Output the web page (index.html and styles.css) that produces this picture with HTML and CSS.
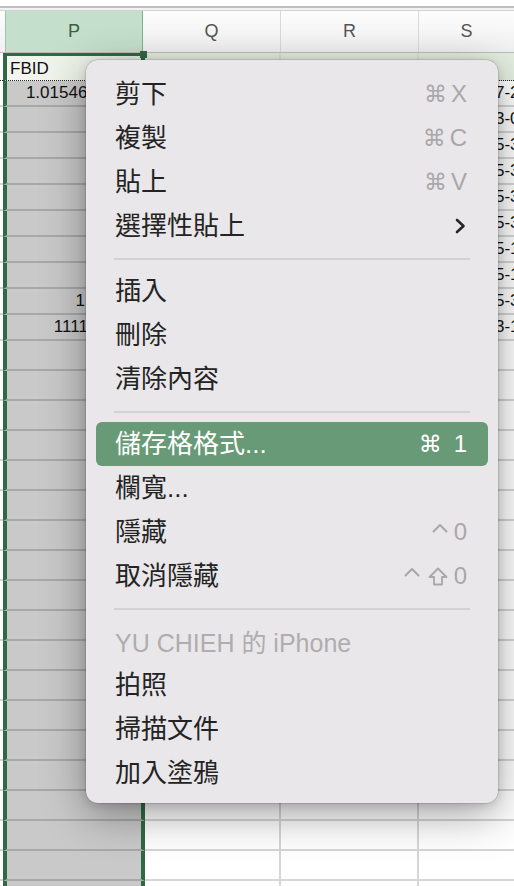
FILE: index.html
```html
<!DOCTYPE html>
<html lang="zh-Hant">
<head>
<meta charset="utf-8">
<title>Excel context menu</title>
<link rel="stylesheet" href="styles.css">
</head>
<body>
<div class="screen">
  <div class="topbar"></div>
  <div class="header">
    <div class="hg"></div>
    <div class="hc hp">P</div>
    <div class="hc">Q</div>
    <div class="hc">R</div>
    <div class="hc hs">S</div>
  </div>
  <div class="sheet">
    <div class="row r1"><div class="g"></div><div class="c p active">FBID</div><div class="c q"></div><div class="c r"></div><div class="c s"></div></div>
    <div class="row r26"><div class="g"></div><div class="c p num">1.015465E+16</div><div class="c q"></div><div class="c r"></div><div class="c s">2016-07-21</div></div>
    <div class="row r26"><div class="g"></div><div class="c p num"></div><div class="c q"></div><div class="c r"></div><div class="c s">2016-03-04</div></div>
    <div class="row r26"><div class="g"></div><div class="c p num"></div><div class="c q"></div><div class="c r"></div><div class="c s">2016-05-31</div></div>
    <div class="row r26"><div class="g"></div><div class="c p num"></div><div class="c q"></div><div class="c r"></div><div class="c s">2016-05-31</div></div>
    <div class="row r26"><div class="g"></div><div class="c p num"></div><div class="c q"></div><div class="c r"></div><div class="c s">2016-05-30</div></div>
    <div class="row r26"><div class="g"></div><div class="c p num"></div><div class="c q"></div><div class="c r"></div><div class="c s">2016-05-30</div></div>
    <div class="row r26"><div class="g"></div><div class="c p num"></div><div class="c q"></div><div class="c r"></div><div class="c s">2016-05-18</div></div>
    <div class="row r26"><div class="g"></div><div class="c p num"></div><div class="c q"></div><div class="c r"></div><div class="c s">2016-05-17</div></div>
    <div class="row r26"><div class="g"></div><div class="c p num">1.00001</div><div class="c q"></div><div class="c r"></div><div class="c s">2016-05-31</div></div>
    <div class="row r26"><div class="g"></div><div class="c p num">1111111111</div><div class="c q"></div><div class="c r"></div><div class="c s">2016-03-15</div></div>
    <div class="row r30"><div class="g"></div><div class="c p"></div><div class="c q"></div><div class="c r"></div><div class="c s"></div></div>
    <div class="row r30"><div class="g"></div><div class="c p"></div><div class="c q"></div><div class="c r"></div><div class="c s"></div></div>
    <div class="row r30"><div class="g"></div><div class="c p"></div><div class="c q"></div><div class="c r"></div><div class="c s"></div></div>
    <div class="row r30"><div class="g"></div><div class="c p"></div><div class="c q"></div><div class="c r"></div><div class="c s"></div></div>
    <div class="row r30"><div class="g"></div><div class="c p"></div><div class="c q"></div><div class="c r"></div><div class="c s"></div></div>
    <div class="row r30"><div class="g"></div><div class="c p"></div><div class="c q"></div><div class="c r"></div><div class="c s"></div></div>
    <div class="row r30"><div class="g"></div><div class="c p"></div><div class="c q"></div><div class="c r"></div><div class="c s"></div></div>
    <div class="row r30"><div class="g"></div><div class="c p"></div><div class="c q"></div><div class="c r"></div><div class="c s"></div></div>
    <div class="row r30"><div class="g"></div><div class="c p"></div><div class="c q"></div><div class="c r"></div><div class="c s"></div></div>
    <div class="row r30"><div class="g"></div><div class="c p"></div><div class="c q"></div><div class="c r"></div><div class="c s"></div></div>
    <div class="row r30"><div class="g"></div><div class="c p"></div><div class="c q"></div><div class="c r"></div><div class="c s"></div></div>
    <div class="row r30"><div class="g"></div><div class="c p"></div><div class="c q"></div><div class="c r"></div><div class="c s"></div></div>
    <div class="row r30"><div class="g"></div><div class="c p"></div><div class="c q"></div><div class="c r"></div><div class="c s"></div></div>
    <div class="row r30"><div class="g"></div><div class="c p"></div><div class="c q"></div><div class="c r"></div><div class="c s"></div></div>
    <div class="row r30"><div class="g"></div><div class="c p"></div><div class="c q"></div><div class="c r"></div><div class="c s"></div></div>
    <div class="row r30"><div class="g"></div><div class="c p"></div><div class="c q"></div><div class="c r"></div><div class="c s"></div></div>
    <div class="row r30"><div class="g"></div><div class="c p"></div><div class="c q"></div><div class="c r"></div><div class="c s"></div></div>
    <div class="row r30"><div class="g"></div><div class="c p"></div><div class="c q"></div><div class="c r"></div><div class="c s"></div></div>
    <div class="row r30"><div class="g"></div><div class="c p"></div><div class="c q"></div><div class="c r"></div><div class="c s"></div></div>
  </div>

  <div class="menu">
    <div class="item"><span class="label">剪下</span><span class="key"><span class="cmd">⌘</span>X</span></div>
    <div class="item"><span class="label">複製</span><span class="key"><span class="cmd">⌘</span>C</span></div>
    <div class="item"><span class="label">貼上</span><span class="key"><span class="cmd">⌘</span>V</span></div>
    <div class="item"><span class="label">選擇性貼上</span><svg class="chev" width="11" height="16" viewBox="0 0 11 16"><polyline points="2,2 8.5,8 2,14" fill="none" stroke="#262626" stroke-width="2.6" stroke-linecap="round" stroke-linejoin="round"/></svg></div>
    <div class="sep"></div>
    <div class="item"><span class="label">插入</span></div>
    <div class="item"><span class="label">刪除</span></div>
    <div class="item"><span class="label">清除內容</span></div>
    <div class="sep"></div>
    <div class="item hl"><span class="label">儲存格格式...</span><span class="key"><span class="cmd wide">⌘</span>1</span></div>
    <div class="item"><span class="label">欄寬...</span></div>
    <div class="item"><span class="label">隱藏</span><span class="key"><svg class="caret" width="16" height="10" viewBox="0 0 16 10"><polyline points="1.5,8.5 8,2 14.5,8.5" fill="none" stroke="#a9a7a9" stroke-width="2" stroke-linecap="round" stroke-linejoin="round"/></svg><span class="zero">0</span></span></div>
    <div class="item"><span class="label">取消隱藏</span><span class="key"><svg class="caret" width="16" height="10" viewBox="0 0 16 10"><polyline points="1.5,8.5 8,2 14.5,8.5" fill="none" stroke="#a9a7a9" stroke-width="2" stroke-linecap="round" stroke-linejoin="round"/></svg><svg class="shift" width="20" height="19" viewBox="0 0 20 19"><path d="M10 1.5 L18.5 10 H14 V17.5 H6 V10 H1.5 Z" fill="none" stroke="#a9a7a9" stroke-width="1.8" stroke-linejoin="round"/></svg><span class="zero">0</span></span></div>
    <div class="sep"></div>
    <div class="item dis"><span class="label">YU CHIEH 的 iPhone</span></div>
    <div class="item"><span class="label">拍照</span></div>
    <div class="item"><span class="label">掃描文件</span></div>
    <div class="item"><span class="label">加入塗鴉</span></div>
  </div>
</div>
</body>
</html>
```

FILE: styles.css
```css
* { box-sizing: border-box; }

html, body {
  margin: 0;
  padding: 0;
  background: #ffffff;
}

.screen {
  position: relative;
  width: 514px;
  height: 886px;
  overflow: hidden;
  font-family: "Liberation Sans", Arial, sans-serif;
  color: #111;
}

.topbar {
  height: 11px;
  background: linear-gradient(to bottom, #ffffff 0, #ffffff 6px, #bfbfbf 6px, #bfbfbf 8px, #f2f2f2 8px, #f2f2f2 10px, #d2d2d2 10px, #d2d2d2 11px);
}

.header {
  display: flex;
  height: 42px;
  background: linear-gradient(to bottom, #fdfdfd, #f0f0f0);
  border-bottom: 1px solid #bdbdbd;
}

.hg {
  width: 5px;
  flex: none;
}

.hc {
  width: 138px;
  flex: none;
  display: flex;
  align-items: center;
  justify-content: center;
  font-size: 18px;
  color: #555;
  border-right: 1px solid #d9d9d9;
}

.hc.hp {
  background: #c4dfcb;
  color: #3b5e47;
  border-left: 1px solid #9cc7a5;
  border-right: 1px solid #79b486;
}

.hc.hs {
  flex: 1;
  width: auto;
  border-right: none;
}

.sheet {
  display: flex;
  flex-direction: column;
}

.row {
  display: flex;
  flex: none;
}

.r1 { height: 28px; }
.r26 { height: 26px; }
.r30 { height: 30px; }

.g {
  width: 3px;
  flex: none;
  border-bottom: 2px solid #d2d2d2;
}

.c {
  flex: none;
  display: flex;
  align-items: center;
  font-size: 17px;
  white-space: nowrap;
  overflow: hidden;
  border-bottom: 2px solid #d6d6d6;
}

.c.p {
  width: 142px;
  background: #c9c9c9;
  border-left: 4px solid #2f6a44;
  border-right: 4px solid #2f6a44;
  border-bottom-color: #a8a8a8;
}

.c.num {
  justify-content: flex-end;
  padding-right: 4px;
}

.c.q {
  width: 136px;
  border-right: 2px solid #d6d6d6;
}

.c.r {
  width: 138px;
  border-right: 2px solid #d6d6d6;
}

.c.s {
  flex: 1;
  padding-left: 23px;
}

.r1 .c,
.r1 .g {
  border-bottom: 1px dotted #222;
}

.r1 .c.q,
.r1 .c.r,
.r1 .c.s {
  background: #e4eedf;
}

.r1 .c.q,
.r1 .c.r {
  border-right-color: #d9e3d4;
}

.c.active {
  position: relative;
  overflow: visible;
  background: linear-gradient(to right, #f3f6f0, #e7efe2);
  border-top: 3px solid #2f6a44;
  padding-left: 3px;
  padding-top: 1px;
  font-size: 17px;
  color: #111;
}

.c.active::after {
  content: "";
  position: absolute;
  right: -6px;
  top: -5px;
  width: 7px;
  height: 7px;
  background: #2f6a44;
}

/* context menu overlay */
.menu {
  position: absolute;
  left: 86px;
  top: 60px;
  width: 412px;
  padding: 12px 0 8px;
  background: #e9e7e9;
  border-radius: 12px;
  box-shadow: 0 0 0 0.5px rgba(0, 0, 0, 0.2), 0 12px 44px rgba(0, 0, 0, 0.36), 0 2px 10px rgba(0, 0, 0, 0.14);
  font-family: "Liberation Sans", "Noto Sans CJK TC", sans-serif;
  font-size: 26px;
  color: #232323;
}

.item {
  height: 44px;
  margin: 0 10px;
  padding: 0 21px 0 19px;
  display: flex;
  align-items: center;
  justify-content: space-between;
  border-radius: 6px;
  white-space: nowrap;
}

.label {
  font-family: "Liberation Sans", "Noto Sans CJK TC", sans-serif;
  padding-bottom: 5px;
}

.key {
  display: flex;
  align-items: center;
  color: #a9a7a9;
  font-family: "Liberation Sans", sans-serif;
  font-size: 24px;
}

.cmd {
  font-family: "DejaVu Sans", sans-serif;
  font-size: 23px;
  margin-right: 4px;
}

.cmd.wide {
  margin-right: 12px;
}

.zero {
  margin-left: 6px;
}

.caret {
  display: block;
  margin-top: -8px;
}

.shift {
  display: block;
  margin-left: 8px;
  margin-top: 1px;
}

.item.hl {
  background: #689a77;
  color: #ffffff;
}

.item.hl .key {
  color: #ffffff;
}

.item.dis {
  color: #afadaf;
  font-size: 25px;
}

.item.dis .label {
  padding-bottom: 0;
}

.chev {
  display: block;
  margin-right: 1px;
}

.sep {
  height: 21px;
  margin: 0 28px;
  display: flex;
  align-items: center;
}

.sep::before {
  content: "";
  display: block;
  width: 100%;
  height: 2px;
  background: #d3d1d3;
}
```
